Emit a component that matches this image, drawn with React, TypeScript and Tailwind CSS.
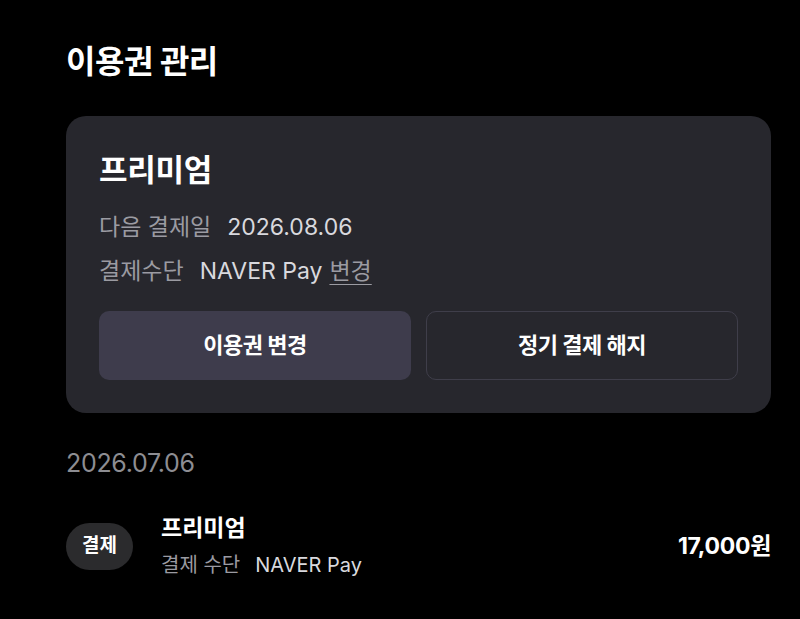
export default function App() {
  return (
    <div
      className="min-h-[619px] w-full bg-black text-white pl-[66px] pr-[29px] pt-[38px]"
      style={{ fontFamily: 'Inter, "Noto Sans CJK KR", sans-serif' }}
    >
      <h1 className="text-[32px] leading-[48px] font-bold tracking-[-0.5px]">이용권 관리</h1>

      <section className="mt-[30px] rounded-[20px] bg-[#27272d] px-[33px] pt-[32px] pb-[33px]">
        <h2 className="text-[31px] leading-[44px] font-bold tracking-[-0.3px]">프리미엄</h2>
        <div className="mt-[18px] flex flex-col gap-[9px] text-[23px] leading-[35px]">
          <p className="flex items-center">
            <span className="text-[#9b9ba2]">다음 결제일</span>
            <span className="ml-[16px] text-[#d9d9de]">2026.08.06</span>
          </p>
          <p className="flex items-center">
            <span className="text-[#9b9ba2]">결제수단</span>
            <span className="ml-[16px] text-[#d9d9de]">NAVER Pay</span>
            <a className="ml-[7px] text-[#9b9ba2] underline underline-offset-[5px] decoration-1">변경</a>
          </p>
        </div>
        <div className="mt-[22px] grid grid-cols-2 gap-[15px]">
          <button className="h-[69px] rounded-[10px] bg-[#3e3c4c] text-[22px] font-bold text-white tracking-[-0.5px]">
            이용권 변경
          </button>
          <button className="h-[69px] rounded-[10px] border border-[#3f3e4a] bg-transparent text-[22px] font-bold text-white tracking-[-0.5px]">
            정기 결제 해지
          </button>
        </div>
      </section>

      <p className="mt-[34px] text-[25px] leading-[32px] text-[#8d8d92] tracking-[-0.3px]">2026.07.06</p>

      <div className="mt-[34px] flex items-center">
        <span className="flex h-[47px] w-[67px] items-center justify-center rounded-full bg-[#2b2b2d] text-[19px] font-bold">
          결제
        </span>
        <div className="ml-[28px] flex-1">
          <p className="text-[23px] leading-[30px] font-bold">프리미엄</p>
          <p className="mt-[8px] text-[20px] leading-[28px]">
            <span className="text-[#9b9ba2]">결제 수단</span>
            <span className="ml-[15px] text-[#d9d9de]">NAVER Pay</span>
          </p>
        </div>
        <span className="text-[23px] font-bold tracking-[-0.3px]">17,000원</span>
      </div>
    </div>
  )
}
